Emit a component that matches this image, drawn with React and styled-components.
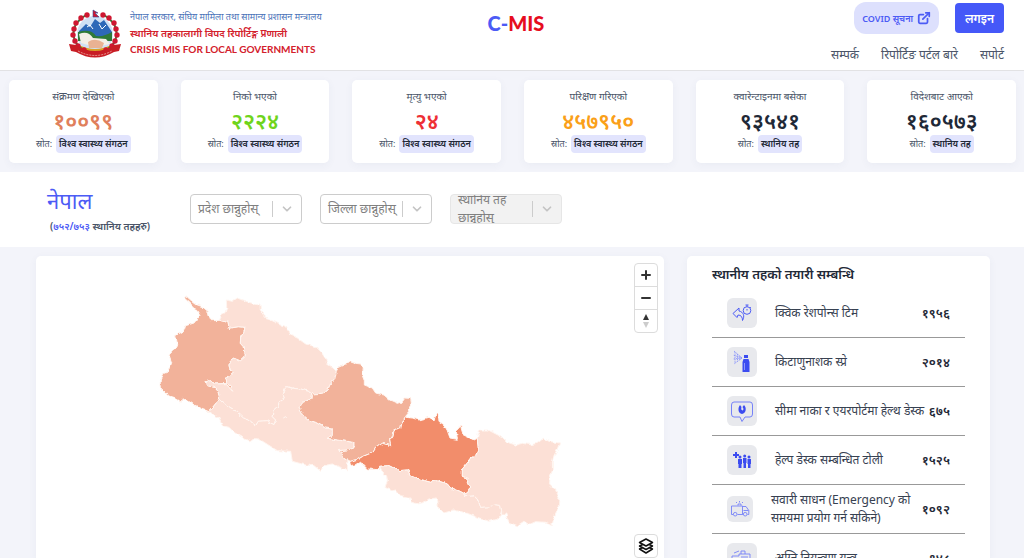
import React from 'react'
import styled, { createGlobalStyle } from 'styled-components'
import { FiExternalLink, FiChevronDown } from 'react-icons/fi'

const GlobalStyle = createGlobalStyle`
  * {
    box-sizing: border-box;
  }
  body {
    margin: 0;
    background-color: #f3f4fa;
    color: #2d3748;
    font-family: 'Noto Sans', 'Open Sans', sans-serif;
  }
  button, select {
    font-family: inherit;
  }
`

const stats = [
  { label: 'संक्रमण देखिएको', value: '१००९९', source: 'विश्व स्वास्थ्य संगठन', color: '#e0805c' },
  { label: 'निको भएको', value: '२२२४', source: 'विश्व स्वास्थ्य संगठन', color: '#6fd41c' },
  { label: 'मृत्यु भएको', value: '२४', source: 'विश्व स्वास्थ्य संगठन', color: '#ee2f35' },
  { label: 'परिक्षण गरिएको', value: '४५७९५०', source: 'विश्व स्वास्थ्य संगठन', color: '#faa019' },
  { label: 'क्वारेन्टाइनमा बसेका', value: '९३५४१', source: 'स्थानिय तह', color: '#1f2937' },
  { label: 'विदेशबाट आएको', value: '१६०५७३', source: 'स्थानिय तह', color: '#1f2937' },
]

const provinces = [
  {
    name: 'sudurpashchim',
    fill: '#f2b29a',
    d: 'M103 40 L112 36 L125 48 L143 62 L160 68 L178 83 L182 100 L187 110 L212 109 L237 115 L240 133 L268 128 L288 130 L284 145 L275 160 L274 178 L283 188 L284 203 L289 207 L288 218 L275 230 L258 223 L244 232 L240 243 L243 258 L252 263 L238 275 L231 286 L234 298 L244 306 L254 325 L238 308 L230 299 L196 300 L188 290 L168 293 L176 305 L196 310 L207 322 L212 345 L180 383 L160 375 L135 362 L100 340 L97 355 L80 342 L60 335 L33 310 L34 290 L45 268 L60 262 L68 235 L60 213 L72 200 L85 178 L80 155 L105 140 L110 125 L135 117 L153 95 L140 75 L120 55 Z',
  },
  {
    name: 'karnali',
    fill: '#fce0d6',
    d: 'M212 109 L217 92 L228 86 L233 72 L232 48 L250 52 L265 42 L280 48 L300 55 L325 62 L333 60 L334 75 L345 88 L345 102 L365 108 L395 122 L412 130 L418 142 L422 152 L445 162 L470 180 L500 188 L515 202 L527 220 L535 240 L548 248 L562 262 L557 287 L543 303 L535 320 L520 328 L488 330 L478 322 L455 315 L430 313 L413 308 L405 318 L400 335 L405 345 L390 355 L388 365 L372 380 L370 398 L380 408 L375 422 L352 410 L328 412 L320 425 L300 408 L283 402 L262 382 L235 365 L212 345 L207 322 L196 310 L176 305 L168 293 L188 290 L196 300 L230 299 L238 308 L254 325 L244 306 L234 298 L231 286 L238 275 L252 263 L243 258 L240 243 L244 232 L258 223 L275 230 L288 218 L289 207 L284 203 L283 188 L274 178 L275 160 L284 145 L288 130 L268 128 L240 133 L237 115 Z',
  },
  {
    name: 'lumbini',
    fill: '#fce0d6',
    d: 'M212 345 L235 365 L262 382 L283 402 L300 408 L320 425 L328 412 L352 410 L375 422 L380 408 L370 398 L372 380 L388 365 L390 355 L405 345 L400 335 L405 318 L413 308 L430 313 L455 315 L478 322 L488 330 L486 345 L462 355 L450 372 L462 392 L480 408 L500 415 L530 432 L550 435 L550 455 L535 463 L580 470 L615 475 L615 492 L595 498 L568 500 L580 508 L585 520 L597 528 L595 558 L570 548 L550 540 L523 545 L515 562 L495 545 L470 543 L430 532 L425 502 L385 500 L330 465 L315 464 L303 474 L255 445 L240 430 L220 425 L208 400 L180 383 Z',
  },
  {
    name: 'gandaki',
    fill: '#f2b29a',
    d: 'M562 262 L568 250 L590 240 L603 232 L620 238 L636 240 L640 252 L638 270 L646 290 L646 303 L670 312 L680 327 L705 333 L722 348 L745 358 L760 353 L768 342 L785 343 L787 358 L778 372 L780 388 L770 400 L758 420 L755 435 L735 440 L732 455 L722 468 L725 485 L700 478 L680 492 L672 505 L640 518 L625 527 L604 532 L597 528 L585 520 L580 508 L568 500 L595 498 L615 492 L615 475 L580 470 L535 463 L550 455 L550 435 L530 432 L500 415 L480 408 L462 392 L450 372 L462 355 L486 345 L488 330 L520 328 L535 320 L543 303 L557 287 Z',
  },
  {
    name: 'bagmati',
    fill: '#f28d6b',
    d: 'M770 400 L790 402 L810 408 L840 400 L855 408 L863 388 L868 392 L870 412 L885 422 L895 440 L903 462 L925 466 L922 440 L935 426 L942 452 L975 468 L985 463 L988 495 L980 515 L965 525 L940 555 L940 577 L958 583 L955 595 L962 612 L955 625 L945 630 L930 622 L905 612 L895 600 L865 590 L845 595 L820 588 L785 575 L775 558 L750 560 L720 545 L692 547 L688 557 L655 555 L635 535 L622 542 L607 545 L604 532 L625 527 L640 518 L672 505 L680 492 L700 478 L725 485 L722 468 L732 455 L735 440 L755 435 L758 420 Z',
  },
  {
    name: 'madhesh',
    fill: '#fce0d6',
    d: 'M692 547 L720 545 L750 560 L775 558 L785 575 L820 588 L845 595 L865 590 L895 600 L905 612 L930 622 L945 630 L950 638 L975 635 L988 650 L995 670 L1022 668 L1040 662 L1055 665 L1058 680 L1053 696 L1045 706 L1020 712 L985 700 L960 690 L915 678 L885 687 L868 670 L865 642 L840 645 L825 655 L808 660 L787 655 L780 640 L755 635 L740 618 L728 620 L708 610 L715 590 L712 575 L698 560 Z',
  },
  {
    name: 'koshi',
    fill: '#fce0d6',
    d: 'M985 463 L988 450 L995 438 L1018 438 L1035 447 L1060 460 L1075 475 L1100 483 L1120 478 L1145 482 L1165 478 L1183 463 L1200 472 L1232 477 L1225 495 L1215 515 L1210 535 L1210 560 L1203 580 L1202 600 L1220 618 L1230 640 L1228 670 L1215 700 L1210 722 L1190 715 L1160 713 L1140 722 L1125 712 L1105 725 L1080 715 L1070 690 L1058 690 L1058 680 L1055 665 L1040 662 L1022 668 L995 670 L988 650 L975 635 L950 638 L945 630 L955 625 L962 612 L955 595 L958 583 L940 577 L940 555 L965 525 L980 515 L988 495 Z',
  },
]

const ResponseIcon = () => (
  <svg width='20' height='18' viewBox='0 0 20 18' fill='none' stroke='#4c5bf5' strokeWidth='1'>
    <path d='M7 4 L1 9.500 L5 13.500 L6 11 C9 11 10.500 13 10.500 16.500 C13 12 11.500 8 7 7 Z' strokeLinejoin='round' />
    <circle cx='15' cy='6.500' r='3.800' />
    <path d='M13.500 1 H16.500 M15 1 V2.700 M15 5 V6.500 M18 3 L18.800 3.800' />
  </svg>
)

const SprayIcon = () => (
  <svg width='20' height='24' viewBox='0 0 20 24'>
    <g stroke='#8b95fa' strokeWidth='0.900' fill='none' strokeDasharray='1.500 0.800'>
      <path d='M10 8 L2 1 M10 8 L1 5 M10 8 L1 9 M10 8 L2 14 M3 2 V13 M5.500 4 V11.500 M8 6 V10' />
    </g>
    <path d='M12 5 H16 V8 H12 Z M11.500 9 H16.500 L17.500 12 V22 H10.500 V12 Z' fill='#3c4cf0' />
    <path d='M12.500 13 V20' stroke='#a4acfb' strokeWidth='0.800' />
  </svg>
)

const DeskIcon = () => (
  <svg width='24' height='24' viewBox='0 0 24 24' fill='none'>
    <path d='M4 3 H20 Q22.500 3 22.500 6 V15 Q22.500 18 20 18 H15 L12 22.500 L10 18 H4 Q1.500 18 1.500 15 V6 Q1.500 3 4 3 Z' stroke='#7682f8' strokeWidth='1' />
    <path d='M10 6 C7.500 9 8 14.500 12 15 C16 14.500 17 9 14 6 L12.500 8 C14 10 13.500 11 12.500 11.500 C11 11 11 9.500 11.500 8 Z' fill='#3c4cf0' />
  </svg>
)

const TeamIcon = () => (
  <svg width='20' height='18' viewBox='0 0 20 18' fill='#3c4cf0'>
    <path d='M3 1 H5 V3 H7 V5 H5 V7 H3 V5 H1 V3 H3 Z' />
    <circle cx='8' cy='6' r='1.500' />
    <path d='M6 8 H10 V13 H9.500 V17 H6.500 V13 H6 Z' />
    <circle cx='12.700' cy='5' r='1.500' />
    <path d='M11 7 H14.500 V12 H14 V17 H11.500 V12 H11 Z' />
    <circle cx='17' cy='6' r='1.500' />
    <path d='M15.500 8 H19 V13 H18.500 V17 H16 V13 H15.500 Z' />
  </svg>
)

const AmbulanceIcon = () => (
  <svg width='20' height='16' viewBox='0 0 20 16' fill='none' stroke='#7682f8' strokeWidth='0.900'>
    <path d='M3 13.500 H1.500 V5 H12.500 V13.500 H7.500 M12.500 5.500 H16 L18.800 9.500 V13.500 H17.500 M13.500 9.500 H18.500 M13.500 13.500 H12.500' />
    <circle cx='5.200' cy='13.200' r='1.800' />
    <circle cx='15.200' cy='13.200' r='1.800' />
    <path d='M8 4.500 V3 H11 V4.500 M9.500 0 V1.500 M6 1 L7 2 M13 1 L12 2' />
  </svg>
)

const FireIcon = () => (
  <svg width='22' height='20' viewBox='0 0 22 20' fill='none' stroke='#7682f8' strokeWidth='0.900'>
    <path d='M1 8 H8 V6 H19 V16 H1 Z M10 6 V3 H14 V6 M3 5 L8 3 M10 9 H17 M10 12 H17' />
    <circle cx='5' cy='16' r='2' />
    <circle cx='16' cy='16' r='2' />
  </svg>
)

const resources = [
  { label: 'क्विक रेशपोन्स टिम', value: '१९५६', icon: <ResponseIcon /> },
  { label: 'किटाणुनाशक स्प्रे', value: '२०१४', icon: <SprayIcon /> },
  { label: 'सीमा नाका र एयरपोर्टमा हेल्थ डेस्क', value: '६७५', icon: <DeskIcon /> },
  { label: 'हेल्प डेस्क सम्बन्धित टोली', value: '१५२५', icon: <TeamIcon /> },
  { label: 'सवारी साधन (Emergency को समयमा प्रयोग गर्न सकिने)', value: '१०९२', icon: <AmbulanceIcon />, small: true },
  { label: 'अग्नि नियन्त्रण यन्त्र', value: '१४८', icon: <FireIcon /> },
]

const flowers = [
  [19, 6], [13, 9], [8, 14], [6, 20], [5, 26], [7, 32], [10, 37], [16, 41],
  [35, 6], [41, 9], [46, 14], [48, 20], [49, 26], [47, 32], [44, 37], [38, 41],
]

const Emblem = () => (
  <svg width='54' height='50' viewBox='0 0 54 50'>
    <circle cx='27' cy='25' r='18' fill='#cfe0f4' />
    <path d='M11 22 L18 15 L22 18 L27 10 L32 14 L36 11 L44 23 V30 H11 Z' fill='#2d68b8' />
    <path d='M19 18 L22 16 L25 20 M31 15 L34 20 L38 16' stroke='#fff' fill='none' />
    <path d='M10 23 Q23 19 28 27 Q36 28 44 23 V32 H10 Z' fill='#2f7a38' />
    <path d='M11 25 Q20 21 25 29 L38 30 L42 35 L27 38 L13 34 Z' fill='#f4efe6' />
    <path d='M20 33 Q27 28 36 34 L34 39 H21 Z' fill='#e9b293' />
    <path d='M11 36 Q27 44 43 36 L40 43 Q27 49 14 43 Z' fill='#d9a126' />
    <g fill='none' stroke='#2f7a38' strokeWidth='2'>
      <path d='M18 6 Q1 16 7 32 Q10 38 17 42' />
      <path d='M36 6 Q53 16 47 32 Q44 38 37 42' />
    </g>
    {flowers.map(([x, y]) => (
      <circle key={`${x}-${y}`} cx={x} cy={y} r='2.700' fill='#cf1731' />
    ))}
    <path d='M25 1 L30 4 L27 4 L31 8 H25 Z' fill='#cf1731' stroke='#2c4a9a' strokeWidth='0.600' />
    <path d='M1 35 L8 36 Q27 48 46 36 L53 35 L51 42 L46 43 Q27 54 8 43 L3 42 Z' fill='#c81d25' />
    <path d='M10 42 Q27 51 44 42' fill='none' stroke='#f2b8b0' strokeWidth='0.800' strokeDasharray='2 1' />
  </svg>
)

const Filter = ({ id, label, disabled }) => (
  <SelectBox $disabled={disabled}>
    <SelectLabel htmlFor={id}>{label}</SelectLabel>
    <Separator />
    <Arrow>
      <FiChevronDown size={14} strokeWidth={3} />
    </Arrow>
    <Select id={id} disabled={disabled}>
      <option value='' />
    </Select>
  </SelectBox>
)

const NepalMap = () => (
  <MapSvg viewBox='0 0 628 302' role='img' aria-label='Nepal'>
    <filter id='border' x='-5%' y='-5%' width='110%' height='110%' colorInterpolationFilters='sRGB'>
      <feTurbulence type='fractalNoise' baseFrequency='0.180' numOctaves='2' seed='4' />
      <feDisplacementMap in='SourceGraphic' scale='4' xChannelSelector='R' yChannelSelector='G' />
    </filter>
    <g filter='url(#border)'>
      <g transform='translate(113 28) scale(0.33333)' stroke='#fff5f0' strokeWidth='3' strokeLinejoin='round'>
        {provinces.map((p) => (
          <path key={p.name} d={p.d} fill={p.fill} />
        ))}
        <path d='M403 402 L410 398 L417 402' fill='none' />
      </g>
    </g>
  </MapSvg>
)

const App = () => {
  return (
    <Page>
      <GlobalStyle />
      <Header>
        <Brand>
          <Emblem />
          <BrandText>
            <Ministry>नेपाल सरकार, संघिय मामिला तथा सामान्य प्रशासन मन्त्रालय</Ministry>
            <SystemName>स्थानिय तहकालागी विपद रिपोर्टिङ्ग प्रणाली</SystemName>
            <SystemNameEnglish>CRISIS MIS FOR LOCAL GOVERNMENTS</SystemNameEnglish>
          </BrandText>
        </Brand>
        <Logo>
          <span>C-</span>MIS
        </Logo>
        <HeaderRight>
          <Actions>
            <CovidButton>
              COVID सूचना <FiExternalLink size={14} strokeWidth={3} />
            </CovidButton>
            <LoginButton>लगइन</LoginButton>
          </Actions>
          <Nav>
            <NavLink href='#contact'>सम्पर्क</NavLink>
            <NavLink href='#about'>रिपोर्टिङ पर्टल बारे</NavLink>
            <NavLink href='#support'>सपोर्ट</NavLink>
          </Nav>
        </HeaderRight>
      </Header>

      <Stats>
        {stats.map((stat) => (
          <StatCard key={stat.label}>
            <StatLabel>{stat.label}</StatLabel>
            <StatValue $color={stat.color}>{stat.value}</StatValue>
            <Source>
              स्रोत: <Badge>{stat.source}</Badge>
            </Source>
          </StatCard>
        ))}
      </Stats>

      <FilterBar>
        <Region>
          <RegionName>नेपाल</RegionName>
          <RegionCount>
            (<span>७५२/७५३</span> स्थानिय तहहरु)
          </RegionCount>
        </Region>
        <Filter id='province' label='प्रदेश छान्नुहोस्' />
        <Filter id='district' label='जिल्ला छान्नुहोस्' />
        <Filter id='local' label='स्थानिय तह छान्नुहोस्' disabled />
      </FilterBar>

      <Content>
        <MapPanel>
          <NepalMap />
          <MapControls>
            <ZoomGroup>
              <MapButton aria-label='Zoom in'>
                <svg width='10' height='10' viewBox='0 0 10 10'>
                  <path d='M5 1 V9 M1 5 H9' stroke='#333' strokeWidth='2' strokeLinecap='round' />
                </svg>
              </MapButton>
              <MapButton aria-label='Zoom out'>
                <svg width='10' height='10' viewBox='0 0 10 10'>
                  <path d='M1 5 H9' stroke='#333' strokeWidth='2' strokeLinecap='round' />
                </svg>
              </MapButton>
              <MapButton aria-label='Reset north'>
                <svg width='8' height='14' viewBox='0 0 8 14'>
                  <path d='M4 0 L7 6 H1 Z' fill='#333' />
                  <path d='M4 14 L7 8 H1 Z' fill='#ccc' />
                </svg>
              </MapButton>
            </ZoomGroup>
            <ZoomGroup>
              <MapButton aria-label='Layers'>
                <svg width='16' height='16' viewBox='0 0 16 16' fill='#fff' stroke='#111' strokeWidth='1.500' strokeLinejoin='round'>
                  <path d='M8 8 L14.500 11 L8 15 L1.500 11 Z' />
                  <path d='M8 5 L14.500 8 L8 11.500 L1.500 8 Z' />
                  <path d='M8 1 L14.500 4.500 L8 8 L1.500 4.500 Z' />
                </svg>
              </MapButton>
            </ZoomGroup>
          </MapControls>
        </MapPanel>
        <SidePanel>
          <PanelTitle>स्थानीय तहको तयारी सम्बन्धि</PanelTitle>
          {resources.map((item) => (
            <Row key={item.label}>
              <IconBox $small={item.small}>{item.icon}</IconBox>
              <RowLabel>{item.label}</RowLabel>
              <RowValue>{item.value}</RowValue>
            </Row>
          ))}
        </SidePanel>
      </Content>
    </Page>
  )
}

const Page = styled.div`
  height: 100vh;
  overflow: hidden;
  display: flex;
  flex-direction: column;
`

const Header = styled.header`
  flex: none;
  display: grid;
  grid-template-columns: 1fr auto 1fr;
  height: 71px;
  padding: 0 20px 0 28px;
  background-color: #fff;
  border-bottom: 1px solid #e2e2e4;
`

const Brand = styled.div`
  display: flex;
  align-items: flex-start;
  gap: 8px;
  padding: 9px 0 0 40px;
`

const BrandText = styled.div`
  display: flex;
  flex-direction: column;
  white-space: nowrap;
`

const Ministry = styled.div`
  font-size: 9px;
  line-height: 16px;
  color: #4a72b8;
`

const SystemName = styled.div`
  font-size: 10px;
  line-height: 16px;
  font-weight: 600;
  color: #d3202c;
`

const SystemNameEnglish = styled(SystemName)`
  font-family: Lato, sans-serif;
  font-weight: 700;
`

const Logo = styled.div`
  padding-top: 11px;
  font-family: Lato, sans-serif;
  font-size: 20px;
  line-height: 24px;
  font-weight: 900;
  color: #e60d1e;

  span {
    color: #4c5bf5;
  }
`

const HeaderRight = styled.div`
  display: flex;
  flex-direction: column;
  align-items: flex-end;
`

const Actions = styled.div`
  display: flex;
  align-items: center;
  gap: 16px;
  padding-top: 2px;
`

const CovidButton = styled.button`
  display: flex;
  align-items: center;
  gap: 4px;
  height: 32px;
  padding: 0 8px;
  border: none;
  border-radius: 12px;
  background-color: #dde0fd;
  color: #4c5bf5;
  font-size: 9px;
  font-weight: 600;
`

const LoginButton = styled.button`
  height: 30px;
  padding: 0 10px;
  border: none;
  border-radius: 4px;
  background-color: #4558f8;
  color: #fff;
  font-size: 12px;
  font-weight: 600;
`

const Nav = styled.nav`
  display: flex;
  gap: 22px;
  padding-top: 11px;
`

const NavLink = styled.a`
  font-size: 12px;
  line-height: 20px;
  color: #4a5568;
  text-decoration: none;
`

const Stats = styled.section`
  flex: none;
  display: grid;
  grid-template-columns: repeat(6, 1fr);
  gap: 23px;
  padding: 9px 8px 9px 9px;
`

const StatCard = styled.div`
  display: flex;
  flex-direction: column;
  align-items: center;
  height: 83px;
  padding-top: 7px;
  border-radius: 5px;
  background-color: #fff;
  box-shadow: 0 2px 8px rgba(60, 70, 120, 0.05);
  white-space: nowrap;
`

const StatLabel = styled.div`
  font-size: 10px;
  line-height: 18px;
  color: #4a5568;
`

const StatValue = styled.div`
  font-size: 22px;
  line-height: 30px;
  font-weight: 600;
  color: ${({ $color }) => $color};
`

const Source = styled.div`
  display: flex;
  align-items: center;
  gap: 4px;
  font-size: 9px;
  line-height: 18px;
  color: #4a5568;
`

const Badge = styled.span`
  padding: 0 3px;
  border-radius: 4px;
  background-color: #e2e4fd;
  color: #1f2937;
  font-weight: 600;
`

const FilterBar = styled.section`
  flex: none;
  display: flex;
  align-items: flex-start;
  height: 75px;
  padding-left: 47px;
  background-color: #fff;
`

const Region = styled.div`
  width: 143px;
  padding-top: 12px;
  white-space: nowrap;
`

const RegionName = styled.h1`
  margin: 0;
  font-size: 22px;
  line-height: 32px;
  font-weight: 400;
  color: #4c5bf5;
`

const RegionCount = styled.div`
  padding-left: 3px;
  font-size: 10px;
  line-height: 20px;
  font-weight: 600;
  color: #4a5568;

  span {
    color: #4c5bf5;
  }
`

const SelectBox = styled.div`
  position: relative;
  display: flex;
  align-items: center;
  width: 112px;
  height: 30px;
  margin: 22px 18px 0 0;
  overflow: hidden;
  border: 1px solid ${({ $disabled }) => ($disabled ? '#e6e6e6' : '#ccc')};
  border-radius: 4px;
  background-color: ${({ $disabled }) => ($disabled ? '#f2f2f2' : '#fff')};
`

const SelectLabel = styled.label`
  flex: 1;
  padding-left: 7px;
  font-size: 12px;
  line-height: 18px;
  color: #808080;
`

const Separator = styled.span`
  width: 1px;
  height: 16px;
  background-color: #ccc;
`

const Arrow = styled.span`
  display: flex;
  justify-content: center;
  width: 28px;
  color: #c4c4c4;
`

const Select = styled.select`
  position: absolute;
  inset: 0;
  width: 100%;
  border: none;
  appearance: none;
  background: transparent;
`

const Content = styled.main`
  flex: 1;
  min-height: 0;
  display: grid;
  grid-template-columns: 628fr 303fr;
  gap: 23px;
  padding: 9px 34px 0 36px;
`

const MapPanel = styled.section`
  position: relative;
  border-radius: 5px 5px 0 0;
  background-color: #fff;
  box-shadow: 0 2px 8px rgba(60, 70, 120, 0.05);
`

const MapSvg = styled.svg`
  display: block;
  width: 100%;
`

const MapControls = styled.div`
  position: absolute;
  top: 7px;
  right: 6px;
  bottom: 0;
  display: flex;
  flex-direction: column;
  justify-content: space-between;
`

const ZoomGroup = styled.div`
  border: 1px solid #dcdcdc;
  border-radius: 4px;
  background-color: #fff;
`

const MapButton = styled.button`
  display: flex;
  align-items: center;
  justify-content: center;
  width: 22px;
  height: 22px;
  padding: 0;
  border: none;
  background: transparent;

  & + & {
    height: 23px;
    border-top: 1px solid #dcdcdc;
  }
`

const SidePanel = styled.aside`
  padding: 0 25px;
  border-radius: 5px 5px 0 0;
  background-color: #fff;
  box-shadow: 0 2px 8px rgba(60, 70, 120, 0.05);
  overflow: hidden;
`

const PanelTitle = styled.h2`
  margin: 0;
  padding-top: 6px;
  font-size: 13px;
  line-height: 24px;
  height: 33px;
  font-weight: 600;
  color: #1f2937;
  white-space: nowrap;
`

const Row = styled.div`
  display: flex;
  align-items: center;
  height: 49px;
  padding: 0 15px;
  border-bottom: 1px solid #999;
`

const IconBox = styled.div`
  flex: none;
  display: flex;
  align-items: center;
  justify-content: center;
  width: ${({ $small }) => ($small ? '26px' : '30px')};
  height: ${({ $small }) => ($small ? '26px' : '30px')};
  margin-right: 18px;
  border-radius: 6px;
  background-color: #e8e9ed;
`

const RowLabel = styled.div`
  flex: 1;
  font-size: 12px;
  line-height: 18px;
  color: #374151;
`

const RowValue = styled.div`
  font-size: 13px;
  line-height: 18px;
  font-weight: 600;
  color: #1f2937;
`

export default App
